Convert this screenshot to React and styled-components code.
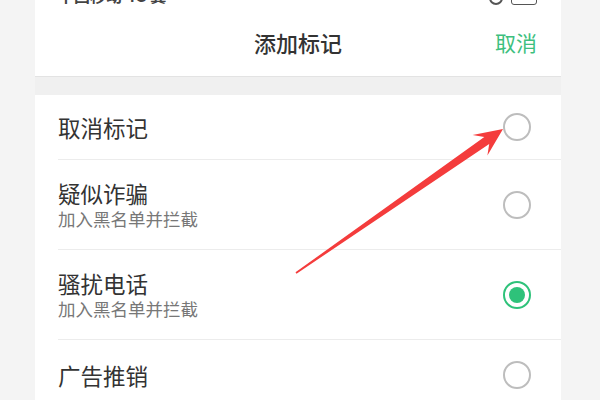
import styled, { createGlobalStyle } from "styled-components";

const Global = createGlobalStyle`
  html, body { margin: 0; padding: 0; background: #f4f4f4; }
  body { font-family: "Noto Sans CJK SC", "Noto Sans", sans-serif; }
`;

const Page = styled.div`
  position: relative;
  width: 600px;
  height: 400px;
  overflow: hidden;
`;

const Phone = styled.div`
  margin-left: 35px;
  width: 526px;
  height: 400px;
  background: #f0f0f0;
`;

const StatusBar = styled.div`
  height: 5px;
  overflow: hidden;
  background: #fff;
  display: flex;
  align-items: flex-end;
  justify-content: space-between;
  padding: 0 24px 0 23px;
`;

const Carrier = styled.span`
  font-size: 16px;
  font-weight: 700;
  line-height: 20px;
  height: 20px;
  flex: none;
  color: #444;
  margin-bottom: 0;
`;

const Icons = styled.div`
  display: flex;
  align-items: flex-end;
  gap: 8px;
`;

const Alarm = styled.div`
  width: 10px;
  height: 10px;
  border: 2px solid #555;
  border-radius: 50%;
`;

const Battery = styled.div`
  width: 24px;
  height: 10px;
  border: 1.5px solid #555;
  border-radius: 3px;
`;

const Header = styled.div`
  height: 71px;
  background: #fff;
  display: grid;
  grid-template-columns: 1fr auto 1fr;
  align-items: center;
  padding: 0 24px;
  border-bottom: 1px solid #e3e3e3;
`;

const Title = styled.div`
  grid-column: 2;
  font-size: 22px;
  font-weight: 500;
  color: #333;
  padding-top: 2px;
`;

const Cancel = styled.div`
  grid-column: 3;
  justify-self: end;
  font-size: 21px;
  color: #3dbf7e;
  padding-top: 2px;
`;

const Gap = styled.div`
  height: 18px;
`;

const List = styled.div`
  background: #fff;
`;

const Row = styled.div`
  display: flex;
  align-items: center;
  margin-left: 23px;
  padding-right: 30px;
  height: ${(p) => p.$h}px;
  border-bottom: ${(p) => (p.$last ? "none" : "1px solid #ececec")};
`;

const Texts = styled.div`
  flex: 1;
  display: flex;
  flex-direction: column;
  gap: 1px;
`;

const Label = styled.div`
  font-size: 22.5px;
  line-height: 28px;
  color: #333;
`;

const Sub = styled.div`
  font-size: 17.5px;
  line-height: 22px;
  color: #777;
`;

const Radio = styled.div`
  width: 24px;
  height: 24px;
  border-radius: 50%;
  border: 2px solid ${(p) => (p.$on ? "#2ec27a" : "#bdbdbd")};
  display: flex;
  align-items: center;
  justify-content: center;
  flex: none;

  &::after {
    content: "";
    width: 16px;
    height: 16px;
    border-radius: 50%;
    background: #2ec27a;
    display: ${(p) => (p.$on ? "block" : "none")};
  }
`;

const Arrow = styled.svg`
  position: absolute;
  left: 0;
  top: 0;
  pointer-events: none;
`;

const items = [
  { label: "取消标记", h: 64 },
  { label: "疑似诈骗", sub: "加入黑名单并拦截", h: 89 },
  { label: "骚扰电话", sub: "加入黑名单并拦截", h: 89, on: true },
  { label: "广告推销", h: 70, last: true },
];

export default function App() {
  return (
    <Page>
      <Global />
      <Phone>
        <StatusBar>
          <Carrier>中国移动 4G 翼</Carrier>
          <Icons>
            <Alarm />
            <Battery />
          </Icons>
        </StatusBar>
        <Header>
          <Title>添加标记</Title>
          <Cancel>取消</Cancel>
        </Header>
        <Gap />
        <List>
          {items.map((it) => (
            <Row key={it.label} $h={it.h} $last={it.last}>
              <Texts>
                <Label>{it.label}</Label>
                {it.sub && <Sub>{it.sub}</Sub>}
              </Texts>
              <Radio $on={it.on} />
            </Row>
          ))}
        </List>
      </Phone>
      <Arrow width="600" height="400" viewBox="0 0 600 400">
        <polygon
          points="295.5,272.3 484.3,137.0 472.6,135.1 503,129 487.4,155.6 489.2,144.0 296.5,273.7"
          fill="#f43c3c"
        />
      </Arrow>
    </Page>
  );
}
